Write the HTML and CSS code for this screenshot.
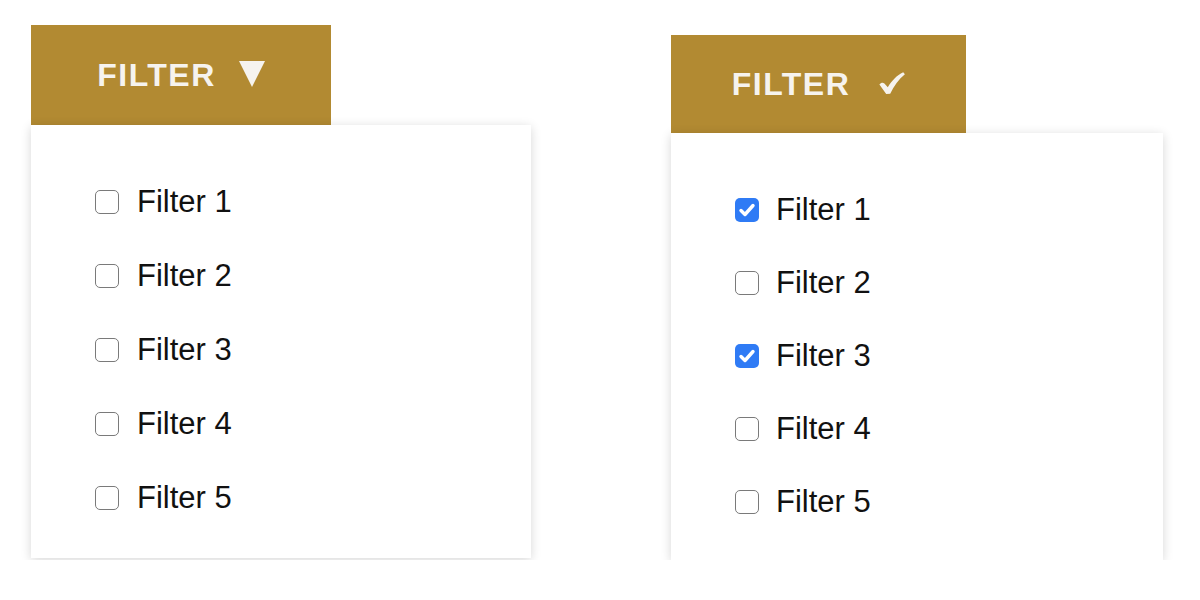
FILE: index.html
```html
<!DOCTYPE html>
<html lang="en">
<head>
    <meta charset="UTF-8">
    <meta name="viewport" content="width=device-width, initial-scale=1.0">
    <title>Filter dropdown</title>
    <link rel="stylesheet" href="styles.css">
</head>
<body>
    <main>
        <div class="dropdown open">
            <button class="filter-btn">FILTER <span class="arrow"></span></button>
            <ul class="panel">
                <li><span class="box"></span>Filter 1</li>
                <li><span class="box"></span>Filter 2</li>
                <li><span class="box"></span>Filter 3</li>
                <li><span class="box"></span>Filter 4</li>
                <li><span class="box"></span>Filter 5</li>
            </ul>
        </div>

        <div class="dropdown applied">
            <button class="filter-btn">FILTER
                <svg class="tick" viewBox="0 0 26 22"><path d="M0.4 12.6C2 10.6 3.9 10.1 5.4 11.6L8.8 15.2C12.8 8.6 17.8 3.2 24.2 0.2L25.9 2.2C19.8 7.2 14.8 14 11.2 21.8L7.2 22Z" /></svg>
            </button>
            <ul class="panel">
                <li><span class="box checked"><svg viewBox="0 0 24 24"><path d="M6 12.5l4 4 8-9" /></svg></span>Filter 1</li>
                <li><span class="box"></span>Filter 2</li>
                <li><span class="box checked"><svg viewBox="0 0 24 24"><path d="M6 12.5l4 4 8-9" /></svg></span>Filter 3</li>
                <li><span class="box"></span>Filter 4</li>
                <li><span class="box"></span>Filter 5</li>
            </ul>
        </div>
    </main>
</body>
</html>
```

FILE: styles.css
```css
body{
    margin: 0;
    background: #ffffff;
    font-family: "Liberation Sans", Arial, sans-serif;
}
main{
    display: flex;
    align-items: flex-start;
    padding: 25px 0 0 31px;
    gap: 140px;
}

.dropdown{
    display: flex;
    flex-direction: column;
    align-items: flex-start;
}

.filter-btn{
    display: flex;
    align-items: center;
    justify-content: center;
    width: 300px;
    height: 100px;
    padding: 0;
    border: none;
    background: #b28a32;
    color: #f6f3ee;
    font-family: "Liberation Sans", Arial, sans-serif;
    font-weight: bold;
    font-size: 32px;
    letter-spacing: 1.5px;
    position: relative;
    z-index: 0;
}
.arrow{
    display: inline-block;
    width: 0;
    height: 0;
    margin-left: 23px;
    margin-bottom: 3px;
    border-left: 13px solid transparent;
    border-right: 13px solid transparent;
    border-top: 26px solid #f6f3ee;
}
.tick{
    width: 26px;
    height: 22px;
    margin-left: 29px;
    margin-bottom: 2px;
    fill: #f6f3ee;
}

.panel{
    list-style: none;
    margin: 0;
    width: 500px;
    box-sizing: border-box;
    padding: 40px 64px 23px;
    background: #ffffff;
    box-shadow: 0 2px 10px rgba(0, 0, 0, 0.16);
    position: relative;
    z-index: 1;
}
.panel li{
    display: flex;
    align-items: center;
    gap: 18px;
    height: 74px;
    font-size: 31px;
    color: #111111;
}

.box{
    width: 24px;
    height: 24px;
    box-sizing: border-box;
    border: 1.5px solid #7a7a7a;
    border-radius: 5px;
    background: #ffffff;
    display: flex;
}
.box.checked{
    border: none;
    background: #2f7bf5;
}
.box svg{
    width: 24px;
    height: 24px;
    fill: none;
    stroke: #ffffff;
    stroke-width: 3.4;
    stroke-linecap: round;
    stroke-linejoin: round;
}

.applied{
    margin-top: 10px;
}
.applied .filter-btn{
    width: 295px;
    height: 98px;
}
.applied .panel{
    width: 492px;
    padding: 40px 64px 22px;
}
.applied .panel li{
    height: 73px;
    gap: 17px;
}
```
